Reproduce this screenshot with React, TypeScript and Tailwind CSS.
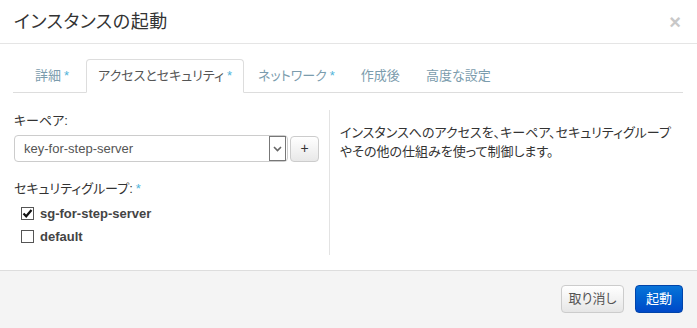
import React from "react";

const font = "font-['Liberation_Sans','Noto_Sans_CJK_JP',sans-serif] [font-feature-settings:'palt']";

function Star() {
  return <span className="text-[#4fb3d9] ml-[3px]">*</span>;
}

function Checkbox({ checked }: { checked: boolean }) {
  return (
    <span className="w-[13px] h-[13px] border border-[#555] bg-white flex items-center justify-center shrink-0">
      {checked && (
        <svg width="11" height="11" viewBox="0 0 11 11">
          <path d="M1.5 5.5 L4.2 8.3 L9.5 2" stroke="#111" strokeWidth="2.2" fill="none" />
        </svg>
      )}
    </span>
  );
}

export default function App() {
  return (
    <div className={`w-[697px] h-[328px] bg-white flex flex-col text-[#333] ${font}`}>
      <div className="h-[44px] border-b border-[#e5e5e5] flex items-center justify-between pl-[14px] pr-[16px] shrink-0">
        <div className="text-[18px] leading-none tracking-[0.6px]">インスタンスの起動</div>
        <div className="text-[#c8c8c8] text-[20px] font-bold leading-none">×</div>
      </div>

      <div className="flex-1 px-[13px] pt-[15px] flex flex-col">
        <div className="flex border-b border-[#ddd] pl-[10px] text-[13px] h-[34px] w-[670px]">
          <div className="pl-[12px] pr-[15px] mr-[2px] flex items-center text-[#7b9cad]">
            詳細<Star />
          </div>
          <div className="px-[11px] mr-[2px] flex items-center text-[#555] bg-white border border-[#ddd] border-b-transparent rounded-t-[4px] -mb-px">
            アクセスとセキュリティ<Star />
          </div>
          <div className="px-[12px] mr-[2px] flex items-center text-[#7b9cad]">
            ネットワーク<Star />
          </div>
          <div className="px-[12px] mr-[2px] flex items-center text-[#7b9cad]">作成後</div>
          <div className="px-[12px] mr-[2px] flex items-center text-[#7b9cad]">高度な設定</div>
        </div>

        <div className="flex mt-[17px]">
          <div className="w-[317px] pl-[1px] pr-[10px] border-r border-[#e3e3e3] h-[145px]">
            <div className="text-[13px] leading-[16px] mt-[3px]">キーペア:</div>
            <div className="flex mt-[6px] items-center">
              <div className="w-[275px] h-[27px] border border-[#ccc] rounded-[4px] flex items-center justify-between pl-[9px] pr-[1px]">
                <span className="text-[13px] text-[#555]">key-for-step-server</span>
                <span className="w-[17px] h-[25px] border border-[#777] bg-white flex items-center justify-center">
                  <svg width="9" height="6" viewBox="0 0 9 6">
                    <path d="M1 1 L4.5 4.5 L8 1" stroke="#666" strokeWidth="1.6" fill="none" />
                  </svg>
                </span>
              </div>
              <div className="ml-[2px] w-[29px] h-[26px] border border-[#ccc] rounded-[4px] bg-gradient-to-b from-white to-[#e8e8e8] flex items-center justify-center text-[14px] text-[#333]">
                +
              </div>
            </div>
            <div className="text-[13px] leading-[16px] mt-[19px]">
              セキュリティグループ:<Star />
            </div>
            <div className="mt-[10px] flex flex-col gap-[10px] pl-[7px]">
              <div className="flex items-center gap-[6px] h-[13px]">
                <Checkbox checked />
                <span className="text-[13px] font-bold text-[#444]">sg-for-step-server</span>
              </div>
              <div className="flex items-center gap-[6px] h-[13px]">
                <Checkbox checked={false} />
                <span className="text-[13px] font-bold text-[#444]">default</span>
              </div>
            </div>
          </div>
          <div className="pl-[10px] pt-[13px] text-[13px] leading-[19px] w-[345px]">
            インスタンスへのアクセスを、キーペア、セキュリティグループ
            <br />
            やその他の仕組みを使って制御します。
          </div>
        </div>
      </div>

      <div className="h-[58px] border-t border-[#ddd] bg-[#f4f4f4] flex items-start justify-end pr-[14px] pt-[14px] gap-[11px] shrink-0">
        <div className="w-[63px] h-[28px] border border-[#ccc] rounded-[4px] bg-gradient-to-b from-white to-[#e6e6e6] flex items-center justify-center text-[13px] text-[#555]">
          取り消し
        </div>
        <div className="w-[48px] h-[28px] border border-[#0044aa] rounded-[4px] bg-gradient-to-b from-[#0a74d8] to-[#0048c8] flex items-center justify-center text-[13px] text-white">
          起動
        </div>
      </div>
    </div>
  );
}
